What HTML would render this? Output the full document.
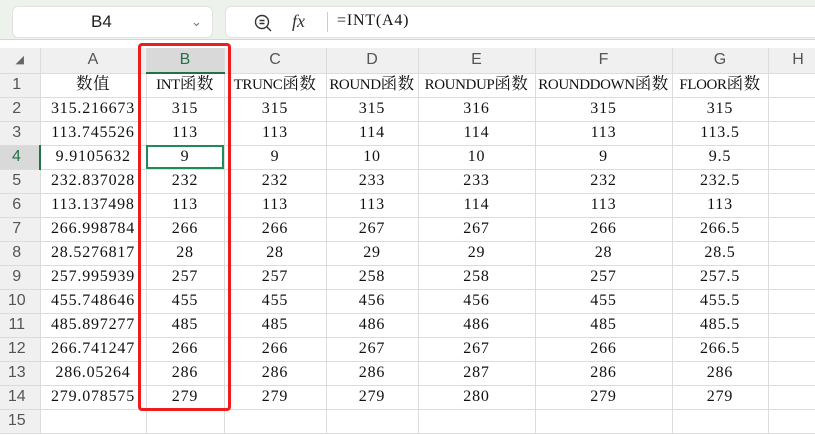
<!DOCTYPE html>
<html><head><meta charset="utf-8"><style>
*{margin:0;padding:0;box-sizing:border-box}
body{width:815px;height:435px;overflow:hidden;background:#fff;position:relative;font-family:"Liberation Serif","Noto Serif CJK SC",serif}
.top{position:absolute;left:0;top:0;width:815px;height:40px;background:#eef2ec;border-bottom:1px solid #d6d6d6}
.nb{position:absolute;left:12px;top:6px;width:201px;height:32px;background:#fff;border-radius:6px;border:1px solid #e2e2e2;font:17px "Liberation Sans",sans-serif;color:#222;line-height:30px;padding-left:78px}
.fb{position:absolute;left:225px;top:6px;width:600px;height:32px;background:#fff;border-radius:6px;border:1px solid #e2e2e2}
table{position:absolute;left:0;top:48px;border-collapse:collapse;table-layout:fixed;width:828px}
td{height:24px;line-height:22px;border-right:1px solid #dcdcdc;border-bottom:1px solid #dcdcdc;text-align:center;font-size:16px;letter-spacing:0.8px;color:#111;white-space:nowrap;overflow:hidden;padding:0}
tr.t td{font-size:15px;letter-spacing:-0.4px}
tr.t td b{font-weight:normal;font-size:16.5px;letter-spacing:0.5px;line-height:1}
tr.h td{height:25px;font:16px "Liberation Sans",sans-serif;line-height:22px;letter-spacing:0;color:#555;background:#f0f0f0;border-right:1px solid #dcdcdc}
td.r,tr.t td.r{font:16px "Liberation Sans",sans-serif;line-height:22px;letter-spacing:0;color:#555;background:#f0f0f0;text-align:center;padding-right:6px}
</style></head><body>
<div class="top">
<div class="nb">B4<span style="position:absolute;left:178px;top:0;color:#777;font-size:13px">&#8964;</span></div>
<div class="fb">
<svg style="position:absolute;left:28px;top:7px" width="18" height="18" viewBox="0 0 18 18"><circle cx="8" cy="8" r="6.5" fill="none" stroke="#333" stroke-width="1.4"/><path d="M13 13l4 4M5.5 6.5h5M5.5 9.5h5" stroke="#333" stroke-width="1.4"/></svg>
<span style="position:absolute;left:66px;top:4px;font:italic 18px 'Liberation Serif',serif;color:#333">fx</span>
<div style="position:absolute;left:101px;top:5px;width:1px;height:20px;background:#ccc"></div>
<span style="position:absolute;left:111px;top:5px;font-size:16px;letter-spacing:0.8px;color:#111">=INT(A4)</span>
</div>
</div>
<table>
<colgroup><col style="width:40px"><col style="width:106px"><col style="width:78px"><col style="width:102px"><col style="width:92px"><col style="width:117px"><col style="width:137px"><col style="width:96px"><col style="width:60px"></colgroup>
<tr class="h"><td style="font-size:11px;color:#666">&#9698;</td><td>A</td><td style="background:#d9d9d9;color:#217346;border-bottom:2px solid #217346">B</td><td>C</td><td>D</td><td>E</td><td>F</td><td>G</td><td>H</td></tr>
<tr class="t"><td class="r">1</td><td><b>数值</b></td><td>INT<b>函数</b></td><td>TRUNC<b>函数</b></td><td>ROUND<b>函数</b></td><td>ROUNDUP<b>函数</b></td><td>ROUNDDOWN<b>函数</b></td><td>FLOOR<b>函数</b></td><td></td></tr>
<tr><td class="r">2</td><td>315.216673</td><td>315</td><td>315</td><td>315</td><td>316</td><td>315</td><td>315</td><td></td></tr>
<tr><td class="r">3</td><td>113.745526</td><td>113</td><td>113</td><td>114</td><td>114</td><td>113</td><td>113.5</td><td></td></tr>
<tr><td class="r" style="background:#d9d9d9;color:#217346;border-right:2px solid #217346">4</td><td>9.9105632</td><td style="outline:2px solid #1f8a5a;outline-offset:-2px">9</td><td>9</td><td>10</td><td>10</td><td>9</td><td>9.5</td><td></td></tr>
<tr><td class="r">5</td><td>232.837028</td><td>232</td><td>232</td><td>233</td><td>233</td><td>232</td><td>232.5</td><td></td></tr>
<tr><td class="r">6</td><td>113.137498</td><td>113</td><td>113</td><td>113</td><td>114</td><td>113</td><td>113</td><td></td></tr>
<tr><td class="r">7</td><td>266.998784</td><td>266</td><td>266</td><td>267</td><td>267</td><td>266</td><td>266.5</td><td></td></tr>
<tr><td class="r">8</td><td>28.5276817</td><td>28</td><td>28</td><td>29</td><td>29</td><td>28</td><td>28.5</td><td></td></tr>
<tr><td class="r">9</td><td>257.995939</td><td>257</td><td>257</td><td>258</td><td>258</td><td>257</td><td>257.5</td><td></td></tr>
<tr><td class="r">10</td><td>455.748646</td><td>455</td><td>455</td><td>456</td><td>456</td><td>455</td><td>455.5</td><td></td></tr>
<tr><td class="r">11</td><td>485.897277</td><td>485</td><td>485</td><td>486</td><td>486</td><td>485</td><td>485.5</td><td></td></tr>
<tr><td class="r">12</td><td>266.741247</td><td>266</td><td>266</td><td>267</td><td>267</td><td>266</td><td>266.5</td><td></td></tr>
<tr><td class="r">13</td><td>286.05264</td><td>286</td><td>286</td><td>286</td><td>287</td><td>286</td><td>286</td><td></td></tr>
<tr><td class="r">14</td><td>279.078575</td><td>279</td><td>279</td><td>279</td><td>280</td><td>279</td><td>279</td><td></td></tr>
<tr><td class="r">15</td><td></td><td></td><td></td><td></td><td></td><td></td><td></td><td></td></tr>
</table>
<div style="position:absolute;left:138px;top:43px;width:93px;height:368px;border:3px solid #ee1c1c;border-radius:4px"></div>
</body></html>
